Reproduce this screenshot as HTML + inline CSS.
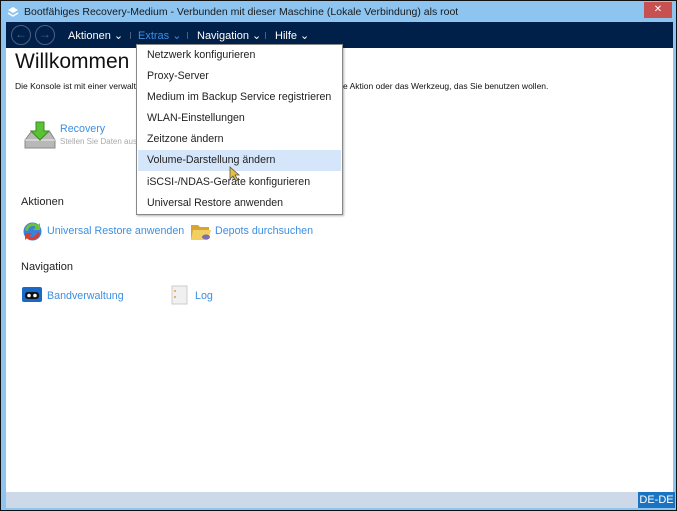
<!DOCTYPE html>
<html><head><meta charset="utf-8"><style>
*{margin:0;padding:0;box-sizing:border-box}
html,body{width:677px;height:511px;overflow:hidden}
body{background:#111;font-family:"Liberation Sans",sans-serif;position:relative}
.frame{position:absolute;left:1px;top:1px;width:675px;height:509px;background:#8dc4f0}
.title{position:absolute;left:24px;top:6px;font-size:10.5px;color:#1a1a1a;white-space:nowrap}
.close{position:absolute;left:644px;top:2px;width:28px;height:16px;background:#c75050;color:#fff;font-size:10px;text-align:center;line-height:15px}
.nav{position:absolute;left:6px;top:22px;width:667px;height:26px;background:#00204a}
.nav span{position:absolute;top:7px;font-size:11px;color:#fff;white-space:nowrap}
.circ{position:absolute;top:3px;width:20px;height:20px;border:1.5px solid #4d5f80;border-radius:50%;color:#4d5f80;font-size:12px;text-align:center;line-height:17px}
.sep{position:absolute;top:10px;width:1px;height:7px;background:#4d5f80}
.content{position:absolute;left:6px;top:48px;width:667px;height:444px;background:#fff}
.status{position:absolute;left:6px;top:492px;width:667px;height:16px;background:#cdd9e8}
.dede{position:absolute;left:638px;top:492px;width:37px;height:16px;background:#1b74c2;color:#fff;font-size:11px;text-align:center;line-height:16px;white-space:nowrap}
.t{position:absolute;white-space:nowrap}
.lnk{color:#3d8fe0;font-size:10.7px}
.menu{position:absolute;left:136px;top:44px;width:207px;height:171px;background:#fff;border:1px solid #888;box-shadow:1px 1px 2px rgba(0,0,0,.3)}
.menu div{position:absolute;left:1px;width:203px;height:21px;font-size:10.6px;color:#222;padding-left:9px;line-height:21px;white-space:nowrap}
</style></head><body>
<div class="frame"></div>
<svg style="position:absolute;left:7px;top:6px" width="12" height="12"><path d="M6 1L11 4L6 7L1 4Z" fill="#fff"/><path d="M1 7L6 10L11 7" stroke="#fff" fill="none" stroke-width="1.5"/></svg>
<div class="title">Bootfähiges Recovery-Medium - Verbunden mit dieser Maschine (Lokale Verbindung) als root</div>
<div class="close">✕</div>
<div class="nav">
<div class="circ" style="left:5px">←</div><div class="circ" style="left:29px">→</div>
<span style="left:62px">Aktionen ⌄</span><div class="sep" style="left:124px"></div>
<span style="left:132px;color:#3d8fe0">Extras ⌄</span><div class="sep" style="left:181px"></div>
<span style="left:191px">Navigation ⌄</span><div class="sep" style="left:259px"></div>
<span style="left:269px">Hilfe ⌄</span>
</div>
<div class="content"></div>
<div class="t" style="left:15px;top:50px;font-size:21px;color:#111">Willkommen bei '</div>
<div class="t" style="left:15px;top:81px;font-size:8.5px;color:#111">Die Konsole ist mit einer verwaltet</div>
<div class="t" style="left:343px;top:81px;font-size:8.5px;color:#111">e Aktion oder das Werkzeug, das Sie benutzen wollen.</div>
<svg style="position:absolute;left:23px;top:120px" width="34" height="32"><path d="M2 20L8 12H27L32 20V28H2Z" fill="#b8b8b8" stroke="#888"/><path d="M2 20H32" stroke="#eee"/><path d="M13 2H21V11H26L17 20L8 11H13Z" fill="#5bc236" stroke="#3a8a20"/></svg>
<div class="t lnk" style="left:60px;top:123px">Recovery</div>
<div class="t" style="left:60px;top:137px;font-size:8px;color:#aaa">Stellen Sie Daten aus ei</div>
<div class="t" style="left:21px;top:196px;font-size:11px;color:#222">Aktionen</div>
<svg style="position:absolute;left:22px;top:221px" width="21" height="21"><circle cx="10.5" cy="10.5" r="9" fill="#3a82d8"/><path d="M3 9A8 8 0 0 1 16 4L18 2V9H11L14 6A5 5 0 0 0 6 10Z" fill="#6cc23a"/><path d="M18 12A8 8 0 0 1 5 17L3 19V12H10L7 15A5 5 0 0 0 15 11Z" fill="#e03a2a"/></svg>
<div class="t lnk" style="left:47px;top:225px">Universal Restore anwenden</div>
<svg style="position:absolute;left:190px;top:221px" width="22" height="21"><path d="M1 4H8L10 6H19V18H1Z" fill="#d9a532"/><path d="M3 9H21L18 19H1Z" fill="#f2cf62"/><ellipse cx="16" cy="16" rx="4" ry="2.5" fill="#7a6fb0"/></svg>
<div class="t lnk" style="left:215px;top:225px">Depots durchsuchen</div>
<div class="t" style="left:21px;top:261px;font-size:11px;color:#222">Navigation</div>
<svg style="position:absolute;left:22px;top:287px" width="21" height="16"><rect x="0" y="0" width="20" height="15" rx="2" fill="#1a68c8"/><rect x="3" y="5" width="14" height="7" rx="3" fill="#111"/><circle cx="7" cy="8.5" r="1.8" fill="#fff"/><circle cx="13" cy="8.5" r="1.8" fill="#fff"/></svg>
<div class="t lnk" style="left:47px;top:290px">Bandverwaltung</div>
<svg style="position:absolute;left:171px;top:285px" width="18" height="20"><rect x="1" y="1" width="15" height="18" fill="#f0f0f0" stroke="#ccc"/><rect x="3" y="5" width="2" height="2" fill="#e8b070"/><rect x="3" y="11" width="2" height="2" fill="#e8b070"/></svg>
<div class="t lnk" style="left:195px;top:290px">Log</div>
<div class="menu">
<div style="top:0px">Netzwerk konfigurieren</div>
<div style="top:21px">Proxy-Server</div>
<div style="top:42px">Medium im Backup Service registrieren</div>
<div style="top:63px">WLAN-Einstellungen</div>
<div style="top:84px">Zeitzone ändern</div>
<div style="top:105px;background:#d5e6fb">Volume-Darstellung ändern</div>
<div style="top:127px">iSCSI-/NDAS-Geräte konfigurieren</div>
<div style="top:148px">Universal Restore anwenden</div>
</div>
<svg style="position:absolute;left:229px;top:166px" width="12" height="16"><path d="M1 1L1 13L4 10L7 15L9 14L6 9L10 9Z" fill="#e8c040" stroke="#555" stroke-width="0.8"/></svg>
<div class="status"></div>
<div class="dede">DE-DE</div>
</body></html>
